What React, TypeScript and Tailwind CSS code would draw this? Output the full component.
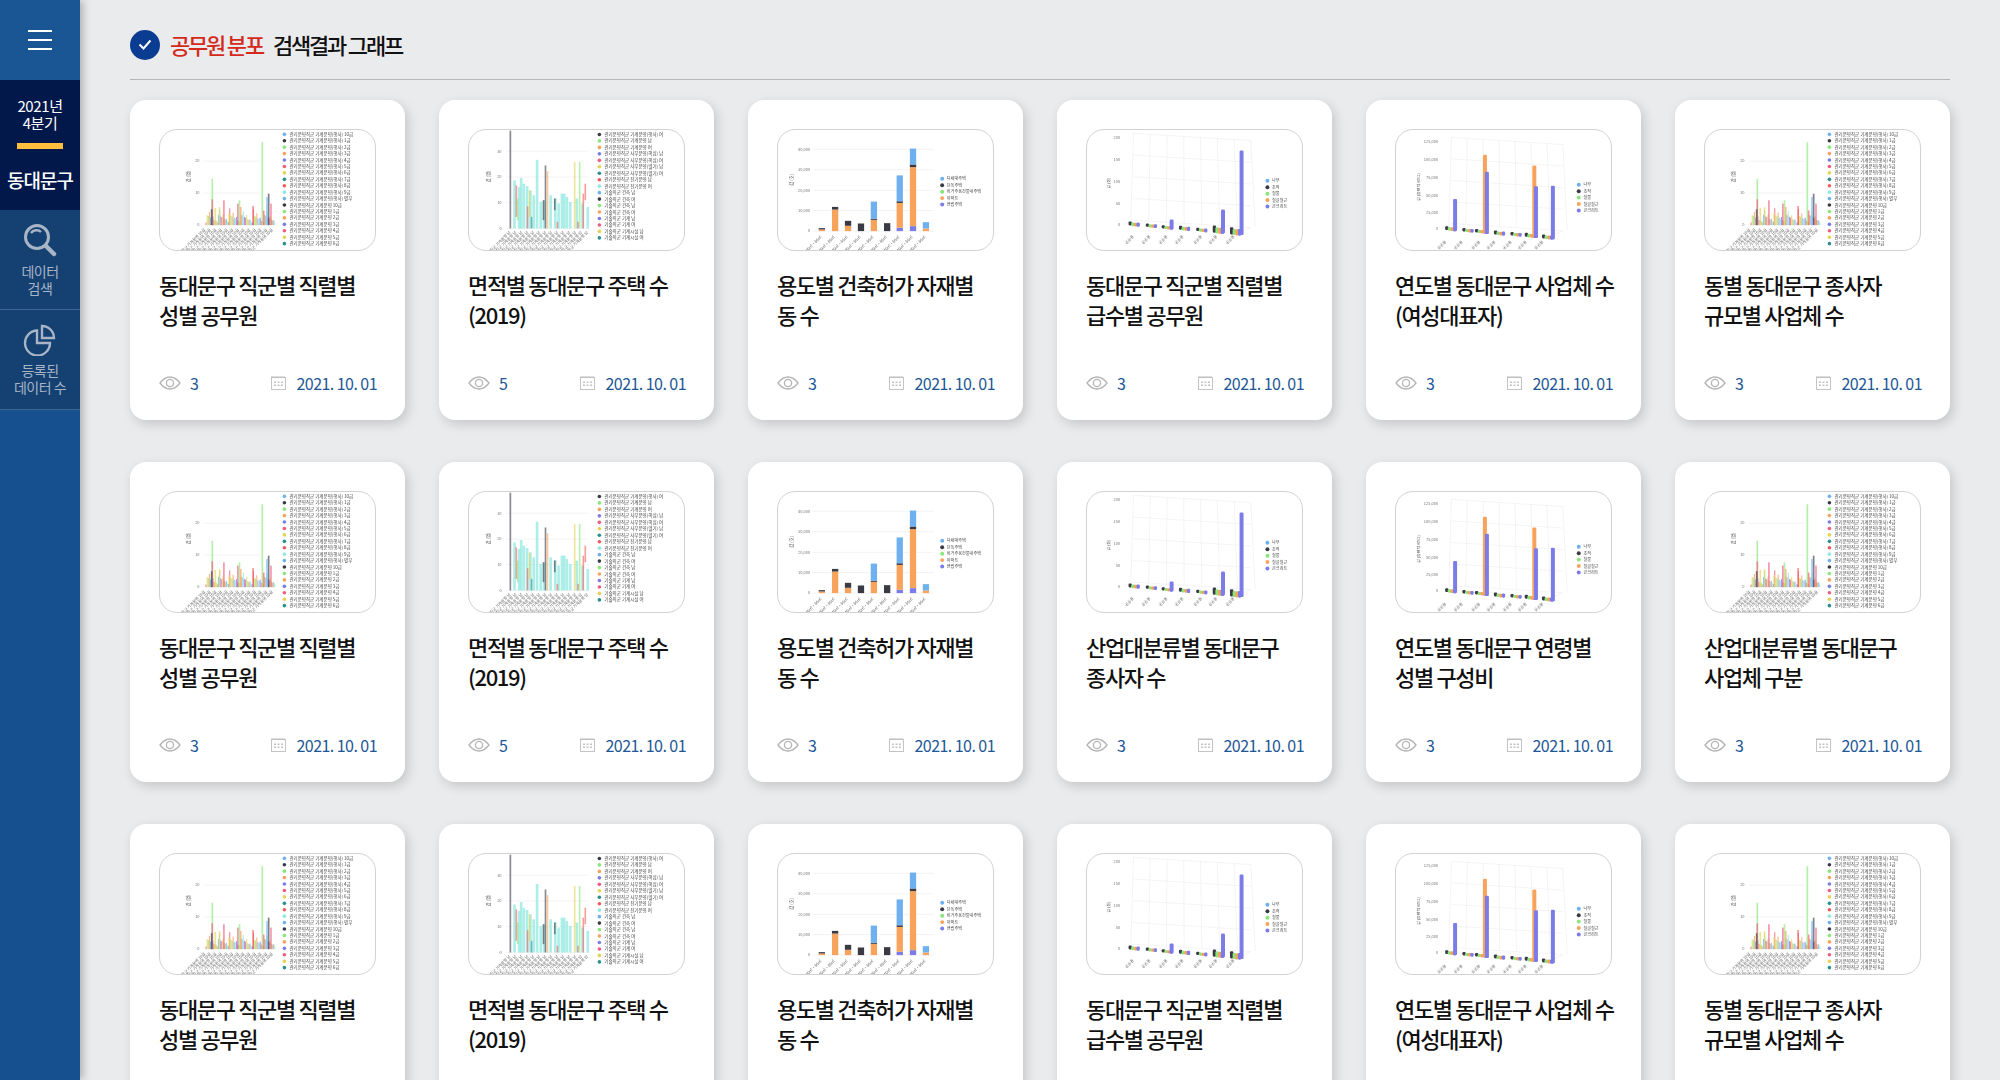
import type { ReactNode } from "react";

const BLUE = "#6fb0ee";
const DARK = "#3a3a45";
const GREEN = "#8ae67a";
const ORANGE = "#f7a35c";
const PURPLE = "#7c7ce8";
const PINK = "#f15c80";
const YELLOW = "#e4d354";
const TEAL = "#2b908f";
const RED = "#f45b5b";
const AQUA = "#91e8e1";
const PALETTE = [BLUE, DARK, GREEN, ORANGE, PURPLE, PINK, YELLOW, TEAL, RED, AQUA];

const Frame = ({ x, children }: { x: number; children: ReactNode }) => (
  <svg
    viewBox={`${x} 28 648 362`}
    className="block h-full w-full blur-[0.7px]"
    fontFamily="'Noto Sans CJK KR', sans-serif"
  >
    {children}
  </svg>
);

const Legend = ({ x, y, step, items }: { x: number; y: number; step: number; items: string[] }) => (
  <g>
    {items.map((label, i) => (
      <g key={i}>
        <circle cx={x} cy={y + i * step} r={5.5} fill={PALETTE[i % 10]} />
        <text x={x + 15} y={y + i * step + 4.5} fontSize={13.6} fill="#444">
          {label}
        </text>
      </g>
    ))}
  </g>
);

const YAxis = ({
  x,
  x1,
  x2,
  ticks,
  title,
  titleX,
  titleY,
}: {
  x: number;
  x1: number;
  x2: number;
  ticks: [string, number][];
  title: string;
  titleX: number;
  titleY: number;
}) => (
  <g>
    {ticks.map(([label, y]) => (
      <g key={label}>
        <line x1={x1} x2={x2} y1={y} y2={y} stroke="#e6e6e6" strokeWidth={1.5} />
        <text x={x} y={y + 4} fontSize={12} fill="#777" textAnchor="end">
          {label}
        </text>
      </g>
    ))}
    <text
      x={titleX}
      y={titleY}
      fontSize={13}
      fill="#666"
      transform={`rotate(-90 ${titleX} ${titleY})`}
      textAnchor="middle"
    >
      {title}
    </text>
  </g>
);

const SlantLabels = ({ xs, y, label, size = 12 }: { xs: number[]; y: number; label: string; size?: number }) => (
  <g>
    {xs.map((x, i) => (
      <text
        key={i}
        x={x}
        y={y}
        fontSize={size}
        fill="#666"
        textAnchor="end"
        transform={`rotate(-45 ${x} ${y})`}
      >
        {label}
      </text>
    ))}
  </g>
);

const multiLegendA = [
  "관리운영직군 기계운영(행사) 10급",
  "관리운영직군 기계운영(행사) 1급",
  "관리운영직군 기계운영(행사) 2급",
  "관리운영직군 기계운영(행사) 3급",
  "관리운영직군 기계운영(행사) 4급",
  "관리운영직군 기계운영(행사) 5급",
  "관리운영직군 기계운영(행사) 6급",
  "관리운영직군 기계운영(행사) 7급",
  "관리운영직군 기계운영(행사) 8급",
  "관리운영직군 기계운영(행사) 9급",
  "관리운영직군 기계운영(행사) 별부",
  "관리운영직군 기계운영 10급",
  "관리운영직군 기계운영 1급",
  "관리운영직군 기계운영 2급",
  "관리운영직군 기계운영 3급",
  "관리운영직군 기계운영 4급",
  "관리운영직군 기계운영 5급",
  "관리운영직군 기계운영 6급",
];

const multiLegendB = [
  "관리운영직군 기계운영(행사) 남",
  "관리운영직군 기계운영(행사) 여",
  "관리운영직군 기계운영 남",
  "관리운영직군 기계운영 여",
  "관리운영직군 사무운영(핵심) 남",
  "관리운영직군 사무운영(핵심) 여",
  "관리운영직군 사무운영(헬기) 남",
  "관리운영직군 사무운영(헬기) 여",
  "관리운영직군 전기운영 남",
  "관리운영직군 전기운영 여",
  "기술직군 건축 남",
  "기술직군 건축 여",
  "기술직군 건축 남",
  "기술직군 건축 여",
  "기술직군 기계 남",
  "기술직군 기계 여",
  "기술직군 기계시설 남",
  "기술직군 기계시설 여",
];

const ChartA = () => {
  const fill = Array.from({ length: 62 }, (_, i) => ({
    x: 165 + i * 3.4,
    h: 8 + ((i * 37) % 41) * (i % 3 === 0 ? 1.1 : 0.6),
    c: [PINK, YELLOW, GREEN, ORANGE, BLUE, AQUA, PURPLE][i % 7],
  }));
  const big: [number, number, string][] = [
    [334, 250, GREEN],
    [183, 140, GREEN],
    [183, 78, PINK],
    [181, 48, DARK],
    [218, 75, PINK],
    [192, 52, YELLOW],
    [205, 54, YELLOW],
    [265, 75, GREEN],
    [260, 65, PINK],
    [269, 55, ORANGE],
    [234, 36, YELLOW],
    [306, 58, RED],
    [353, 95, DARK],
    [348, 85, BLUE],
    [360, 65, PINK],
    [338, 44, RED],
  ];
  return (
    <Frame x={28}>
      <YAxis
        x={147}
        x1={160}
        x2={330}
        ticks={[["20", 122], ["10", 218], ["0", 314]]}
        title="값 (명)"
        titleX={118}
        titleY={168}
      />
      {fill.map((b, i) => (
        <rect key={i} x={b.x} y={315 - b.h} width={3.4} height={b.h} fill={b.c} opacity={0.75} />
      ))}
      {big.map(([x, h, c], i) => (
        <rect key={i} x={x} y={315 - h} width={5} height={h} fill={c} opacity={0.65} />
      ))}
      <SlantLabels
        xs={[165, 182, 199, 216, 233, 250, 267, 284, 301, 318, 335, 352, 369]}
        y={330}
        label="관리운영직군 기계운영 10급"
      />
      <Legend x={403} y={41} step={19.4} items={multiLegendA} />
    </Frame>
  );
};

const ChartB = () => {
  const aqua = [
    [157, 145],
    [171, 125],
    [177, 152],
    [185, 135],
    [195, 128],
    [205, 115],
    [215, 100],
    [225, 207],
    [236, 80],
    [246, 85],
    [266, 100],
    [280, 92],
    [290, 75],
    [300, 105],
    [307, 105],
    [315, 95],
    [325, 80],
    [345, 90],
    [362, 75],
    [378, 65],
  ];
  const other: [number, number, number, string][] = [
    [146, 30, 325, DARK],
    [252, 135, 325, DARK],
    [258, 152, 325, ORANGE],
    [340, 125, 325, YELLOW],
    [355, 125, 325, GREEN],
    [164, 195, 290, RED],
    [168, 235, 300, GREEN],
    [198, 258, 325, RED],
    [204, 210, 290, YELLOW],
    [210, 290, 325, TEAL],
    [246, 240, 300, DARK],
    [280, 235, 270, DARK],
    [288, 305, 325, RED],
    [350, 305, 325, RED],
    [366, 220, 325, RED],
    [372, 190, 240, RED],
  ];
  return (
    <Frame x={24}>
      <YAxis
        x={122}
        x1={136}
        x2={385}
        ticks={[["30", 92], ["20", 170], ["10", 247], ["0", 325]]}
        title="값 (명)"
        titleX={88}
        titleY={168}
      />
      {aqua.map(([x, h], i) => (
        <rect key={i} x={x} y={325 - h} width={8} height={h} fill={AQUA} opacity={0.75} />
      ))}
      {other.map(([x, y1, y2, c], i) => (
        <rect key={i} x={x} y={y1} width={5} height={y2 - y1} fill={c} opacity={0.6} />
      ))}
      <SlantLabels
        xs={[150, 168, 186, 204, 222, 240, 258, 276, 294, 312, 330, 348, 366, 384]}
        y={338}
        label="관리운영직군 기계운영 남"
      />
      <Legend x={417} y={22} step={19.5} items={multiLegendB} />
    </Frame>
  );
};

const stacks: [number, [number, number, string][]][] = [
  [183, [[328, 333, ORANGE], [324, 328, DARK]]],
  [223, [[268, 333, ORANGE], [260, 268, DARK]]],
  [262, [[317, 333, ORANGE], [302, 317, DARK]]],
  [301, [[310, 333, DARK]]],
  [340, [[299, 333, ORANGE], [296, 299, DARK], [244, 296, BLUE]]],
  [380, [[309, 333, DARK]]],
  [418, [[323, 333, PURPLE], [248, 323, ORANGE], [243, 248, DARK], [165, 243, BLUE]]],
  [458, [[318, 333, PURPLE], [140, 318, ORANGE], [132, 140, DARK], [84, 132, BLUE]]],
  [497, [[325, 333, ORANGE], [306, 325, BLUE]]],
];

const ChartStack = () => (
  <Frame x={51}>
    <YAxis
      x={148}
      x1={155}
      x2={520}
      ticks={[["40,000", 86], ["30,000", 148], ["20,000", 210], ["10,000", 271], ["0", 333]]}
      title="값 (호)"
      titleX={96}
      titleY={178}
    />
    {stacks.map(([x, segs]) =>
      segs.map(([y1, y2, c]) => (
        <rect key={`${x}${y1}`} x={x - 9.5} y={y1} width={19} height={y2 - y1} fill={c} />
      )),
    )}
    <SlantLabels xs={[183, 223, 262, 301, 340, 380, 418, 458, 497]} y={352} label="40㎡ ~ 60㎡" />
    <g>
      {["다세대주택", "단독주택", "비거주용건물내주택", "아파트", "연립주택"].map((label, i) => (
        <g key={label}>
          <circle cx={546} cy={175 + i * 19.5} r={6} fill={[BLUE, DARK, GREEN, ORANGE, PURPLE][i]} />
          <text x={560} y={179.5 + i * 19.5} fontSize={12.5} fill="#444">
            {label}
          </text>
        </g>
      ))}
    </g>
  </Frame>
);

const Grid3d = ({
  left,
  right,
  top,
  bottom,
}: {
  left: number;
  right: number;
  top: number;
  bottom: number;
}) => {
  const cols = 7;
  return (
    <g stroke="#e8e8e8" strokeWidth={1.5} fill="none">
      {Array.from({ length: 8 }, (_, i) => {
        const x = left + ((right - left) / cols) * i;
        return <line key={i} x1={x} y1={top + i * 3} x2={x - 8 + i * 3} y2={bottom + i * 3} />;
      })}
      {Array.from({ length: 5 }, (_, i) => {
        const y = top + ((bottom - top) / 4) * i;
        return <line key={i} x1={left} y1={y} x2={right} y2={y + 22} />;
      })}
      <line x1={left} y1={bottom} x2={left - 30} y2={bottom + 12} />
      <line x1={right} y1={bottom + 22} x2={right - 30} y2={bottom + 36} />
    </g>
  );
};

const Column = ({ x, y1, y2, c, w = 12 }: { x: number; y1: number; y2: number; c: string; w?: number }) => (
  <rect x={x - w / 2} y={y1} width={w} height={y2 - y1} rx={3.5} fill={c} />
);

const Cluster = ({ x, y, h = 12 }: { x: number; y: number; h?: number }) => (
  <g>
    <Column x={x} y1={y - h} y2={y} c={DARK} w={10} />
    <Column x={x + 8} y1={y - h * 0.75} y2={y + 2} c={GREEN} w={10} />
    <Column x={x + 16} y1={y - h * 0.7} y2={y + 3} c={ORANGE} w={10} />
    <Column x={x + 24} y1={y - h * 0.75} y2={y + 4} c={PURPLE} w={10} />
  </g>
);

const legend3d = ["나무", "조적", "철물", "철골철근", "콘크리트"];

const Legend3d = ({ x, y }: { x: number; y: number }) => (
  <g>
    {legend3d.map((label, i) => (
      <g key={label}>
        <circle cx={x} cy={y + i * 19.5} r={6} fill={[BLUE, DARK, GREEN, ORANGE, PURPLE][i]} />
        <text x={x + 14} y={y + 4.5 + i * 19.5} fontSize={12.5} fill="#444">
          {label}
        </text>
      </g>
    ))}
  </g>
);

const Chart3dA = () => (
  <Frame x={48}>
    <Grid3d left={188} right={542} top={38} bottom={300} />
    {[["200", 52], ["150", 118], ["100", 183], ["50", 250], ["0", 313]].map(([l, y]) => (
      <text key={l} x={148} y={Number(y) + 4} fontSize={12} fill="#777" textAnchor="end">
        {l}
      </text>
    ))}
    <text x={116} y={188} fontSize={12} fill="#666" transform="rotate(-90 116 188)" textAnchor="middle">
      값 (동)
    </text>
    <Cluster x={178} y={316} />
    <Cluster x={230} y={320} h={10} />
    <Cluster x={278} y={325} h={10} />
    <Column x={303} y1={298} y2={328} c={PURPLE} />
    <Cluster x={330} y={329} />
    <Cluster x={382} y={333} h={10} />
    <Cluster x={432} y={338} h={22} />
    <Column x={458} y1={268} y2={340} c={PURPLE} />
    <Cluster x={484} y={343} h={22} />
    <Column x={514} y1={90} y2={345} c={PURPLE} />
    <SlantLabels xs={[190, 240, 292, 340, 396, 442, 494]} y={350} label="공공용" />
    <Legend3d x={592} y={181} />
  </Frame>
);

const Chart3dB = () => (
  <Frame x={45}>
    <Grid3d left={212} right={548} top={50} bottom={310} />
    {[["125,000", 64], ["100,000", 118], ["75,000", 171], ["50,000", 225], ["25,000", 277], ["0", 327]].map(
      ([l, y]) => (
        <text key={l} x={172} y={Number(y) + 4} fontSize={12} fill="#777" textAnchor="end">
          {l}
        </text>
      ),
    )}
    <text x={118} y={200} fontSize={12} fill="#666" transform="rotate(-90 118 200)" textAnchor="middle">
      값 (총면적 Km2)
    </text>
    <Cluster x={198} y={330} />
    <Column x={223} y1={236} y2={333} c={PURPLE} />
    <Cluster x={250} y={334} h={10} />
    <Cluster x={288} y={337} h={10} />
    <Column x={313} y1={103} y2={340} c={ORANGE} />
    <Column x={319} y1={154} y2={342} c={PURPLE} />
    <Cluster x={345} y={343} />
    <Cluster x={395} y={346} h={10} />
    <Cluster x={438} y={350} />
    <Column x={462} y1={135} y2={352} c={ORANGE} />
    <Column x={467} y1={198} y2={354} c={PURPLE} />
    <Cluster x={490} y={355} />
    <Column x={518} y1={196} y2={358} c={PURPLE} />
    <SlantLabels xs={[197, 247, 300, 346, 395, 440, 490]} y={366} label="공공용" />
    <Legend3d x={596} y={193} />
  </Frame>
);

const charts = [ChartA, ChartB, ChartStack, Chart3dA, Chart3dB, ChartA];

const EyeIcon = () => (
  <svg width="22" height="14" viewBox="0 0 22 14" fill="none" stroke="#b4b4b4" strokeWidth="1.3">
    <path d="M1 7C4 3 7 1 11 1s7 2 10 6c-3 4-6 6-10 6S4 11 1 7Z" />
    <circle cx="11" cy="7" r="3.6" />
  </svg>
);

const CalendarIcon = () => (
  <svg width="15" height="14" viewBox="0 0 15 14" fill="none">
    <rect x="0.5" y="1.5" width="14" height="12" stroke="#c4c4c4" />
    <path d="M0.5 1h14" stroke="#bdbdbd" strokeWidth="2" strokeDasharray="1 1" />
    <path
      d="M3 5.5h2v1.6H3zM6.5 5.5h2v1.6h-2zM10 5.5h2v1.6h-2zM3 8.5h2v1.6H3zM6.5 8.5h2v1.6h-2zM10 8.5h2v1.6h-2z"
      fill="#c4c4c4"
    />
  </svg>
);

const row1 = [
  ["동대문구 직군별 직렬별", "성별 공무원", 3],
  ["면적별 동대문구 주택 수", "(2019)", 5],
  ["용도별 건축허가 자재별", "동 수", 3],
  ["동대문구 직군별 직렬별", "급수별 공무원", 3],
  ["연도별 동대문구 사업체 수", "(여성대표자)", 3],
  ["동별 동대문구 종사자", "규모별 사업체 수", 3],
] as const;

const row2 = [
  ["동대문구 직군별 직렬별", "성별 공무원", 3],
  ["면적별 동대문구 주택 수", "(2019)", 5],
  ["용도별 건축허가 자재별", "동 수", 3],
  ["산업대분류별 동대문구", "종사자 수", 3],
  ["연도별 동대문구 연령별", "성별 구성비", 3],
  ["산업대분류별 동대문구", "사업체 구분", 3],
] as const;

const cards = [...row1, ...row2, ...row1];

const Card = ({ index }: { index: number }) => {
  const [line1, line2, views] = cards[index];
  const Chart = charts[index % 6];
  return (
    <div className="flex h-[320px] flex-col rounded-[16px] bg-white px-[29px] pt-[29px] shadow-[3px_4px_12px_rgba(0,0,0,0.16)]">
      <div className="h-[122px] overflow-hidden rounded-[18px] border border-[#d2d2d2] bg-white">
        <Chart />
      </div>
      <p className="mt-[18px] whitespace-nowrap text-[22px] leading-[30px] font-medium tracking-[-1.35px] text-[#111]">
        {line1}
        <br />
        {line2}
      </p>
      <div className="mt-[44px] flex items-center text-[16px] leading-[20px] text-[#1d5796]">
        <EyeIcon />
        <span className="ml-[9px]">{views}</span>
        <span className="ml-auto">
          <CalendarIcon />
        </span>
        <span className="ml-[10px] -mr-[1px] tracking-[-0.55px]">2021. 10. 01</span>
      </div>
    </div>
  );
};

const Sidebar = () => (
  <aside className="flex h-full w-[80px] shrink-0 flex-col bg-[#17508e] shadow-[3px_0_8px_rgba(0,0,0,0.25)]">
    <div className="flex h-[80px] flex-col items-center justify-center gap-[7px] bg-[#1a5594]">
      <span className="h-[2px] w-[24px] bg-white" />
      <span className="h-[2px] w-[24px] bg-white" />
      <span className="h-[2px] w-[24px] bg-white" />
    </div>
    <div className="flex h-[130px] flex-col items-center bg-[#03184a] pt-[17px] text-white">
      <p className="text-center text-[15px] leading-[17px] tracking-[-0.4px]">
        2021년
        <br />
        4분기
      </p>
      <span className="mt-[12px] h-[6px] w-[46px] bg-[#ffbe3c]" />
      <p className="mt-[19px] text-[19px] leading-[24px] font-medium tracking-[-1px]">동대문구</p>
    </div>
    <div className="flex h-[100px] flex-col items-center border-b border-[#3d6690] bg-[#144072] pt-[13px] text-center text-[14px] leading-[17px] tracking-[-0.5px] text-[#a7b5c6]">
      <svg width="34" height="34" viewBox="0 0 34 34" fill="none" stroke="#a7b5c6" strokeWidth="3">
        <circle cx="14" cy="14" r="11.5" />
        <path d="M8 10c2-3 7-4 10-1" strokeWidth="2.4" />
        <path d="M23 23l8 8" strokeWidth="4.5" strokeLinecap="round" />
      </svg>
      <p className="mt-[6px]">
        데이터
        <br />
        검색
      </p>
    </div>
    <div className="flex h-[100px] flex-col items-center border-b border-[#3d6690] bg-[#144072] pt-[14px] text-center text-[14px] leading-[17px] tracking-[-0.5px] text-[#a7b5c6]">
      <svg width="34" height="32" viewBox="0 0 34 32" fill="none" stroke="#a7b5c6" strokeWidth="2.4">
        <path d="M14 6.5A12.5 12.5 0 1 0 27 19H14Z" />
        <path d="M19 2a12 12 0 0 1 12 12H19Z" />
      </svg>
      <p className="mt-[6px]">
        등록된
        <br />
        데이터 수
      </p>
    </div>
  </aside>
);

const App = () => {
  return (
    <div className="flex h-screen w-full overflow-hidden bg-[#eaebed] font-['Noto_Sans_CJK_KR','Noto_Sans',sans-serif]">
      <Sidebar />
      <main className="min-w-0 flex-1 px-[50px]">
        <div className="mb-[20px] flex h-[80px] items-center border-b border-[#b5b7ba] pt-[10px]">
          <span className="flex h-[30px] w-[30px] items-center justify-center rounded-full bg-[#0a3d91]">
            <svg width="14" height="11" viewBox="0 0 14 11" fill="none" stroke="#fff" strokeWidth="2">
              <path d="M1.5 5.5l4 4 7-8" />
            </svg>
          </span>
          <h1 className="-mt-[2px] ml-[10px] text-[22px] leading-[30px] font-medium tracking-[-2.2px] text-[#111]">
            <span className="text-[#d42a1c]">공무원 분포</span>
            <span className="ml-[10px]">검색결과 그래프</span>
          </h1>
        </div>
        <div className="grid grid-cols-6 gap-x-[34px] gap-y-[42px]">
          {cards.map((_, i) => (
            <Card key={i} index={i} />
          ))}
        </div>
      </main>
    </div>
  );
};

export default App;
